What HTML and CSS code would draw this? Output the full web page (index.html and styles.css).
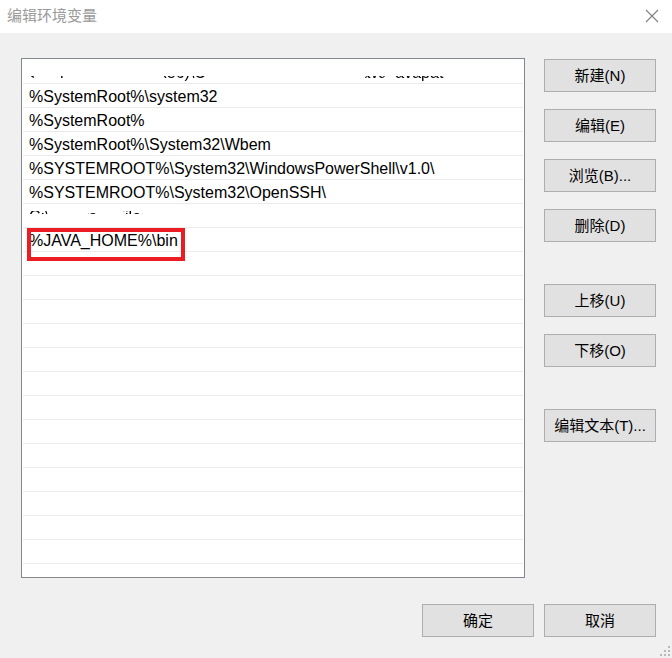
FILE: index.html
```html
<!DOCTYPE html>
<html lang="zh-CN">
<head>
<meta charset="utf-8">
<title>编辑环境变量</title>
<link rel="stylesheet" href="styles.css">
</head>
<body>
<div class="window">
  <header class="titlebar">
    <span class="title">编辑环境变量</span>
    <svg class="close" width="14" height="14" viewBox="0 0 14 14"><path d="M1 1 L13 13 M13 1 L1 13" stroke="#808080" stroke-width="1.1" fill="none"/></svg>
  </header>
  <main class="content">
    <div class="list">
      <div class="row"><span class="ghost ghost-bottom">C:\Program Files (x86)\Common Files\Oracle\Java\javapath</span></div>
      <div class="row">%SystemRoot%\system32</div>
      <div class="row">%SystemRoot%</div>
      <div class="row">%SystemRoot%\System32\Wbem</div>
      <div class="row">%SYSTEMROOT%\System32\WindowsPowerShell\v1.0\</div>
      <div class="row">%SYSTEMROOT%\System32\OpenSSH\</div>
      <div class="row"><span class="ghost ghost-top">C:\Program Files\NVIDIA Corporation\NVIDIA NvDLISR</span></div>
      <div class="row">%JAVA_HOME%\bin</div>
      <div class="row"></div><div class="row"></div><div class="row"></div><div class="row"></div>
      <div class="row"></div><div class="row"></div><div class="row"></div><div class="row"></div>
      <div class="row"></div><div class="row"></div><div class="row"></div><div class="row"></div>
      <div class="row"></div><div class="row"></div>
      <div class="highlight"></div>
    </div>
    <div class="side">
      <div class="group">
        <button class="btn">新建(N)</button>
        <button class="btn">编辑(E)</button>
        <button class="btn">浏览(B)...</button>
        <button class="btn">删除(D)</button>
      </div>
      <div class="group">
        <button class="btn">上移(U)</button>
        <button class="btn">下移(O)</button>
      </div>
      <div class="group">
        <button class="btn">编辑文本(T)...</button>
      </div>
    </div>
  </main>
  <footer class="footer">
    <button class="btn">确定</button>
    <button class="btn">取消</button>
  </footer>
  <svg class="grip" width="12" height="12" viewBox="0 0 12 12" fill="#b8b8b8">
    <rect x="9" y="1" width="2" height="2"/>
    <rect x="5" y="5" width="2" height="2"/><rect x="9" y="5" width="2" height="2"/>
    <rect x="1" y="9" width="2" height="2"/><rect x="5" y="9" width="2" height="2"/><rect x="9" y="9" width="2" height="2"/>
  </svg>
</div>
</body>
</html>
```
FILE: styles.css
```css
* { box-sizing: border-box; }
html, body { margin: 0; padding: 0; }
body {
  width: 672px;
  height: 658px;
  background: #f0f0f0;
  font-family: "Liberation Sans", "Noto Sans CJK SC", sans-serif;
  overflow: hidden;
}
.window {
  position: relative;
  width: 672px;
  height: 658px;
}
.titlebar {
  height: 33px;
  background: #ffffff;
  display: flex;
  align-items: center;
  justify-content: space-between;
  padding: 0 13px 5px 7px;
}
.title {
  font-family: "Noto Sans CJK SC", sans-serif;
  font-size: 15px;
  color: #9a9a9a;
}
.close { display: block; margin-top: 3px; }
.content {
  display: flex;
  padding: 25px 0 0 21px;
  gap: 19px;
}
.list {
  position: relative;
  width: 504px;
  height: 520px;
  border: 1px solid #828790;
  background: #ffffff;
  padding: 1px 1px 0 1px;
  overflow: hidden;
}
.row {
  height: 24px;
  border-bottom: 1px solid #ebebeb;
  font-size: 16px;
  line-height: 23px;
  padding: 1px 0 0 6px;
  color: #000;
  white-space: nowrap;
}
.ghost { display: block; }
.ghost-bottom {
  clip-path: inset(15px 0 3px 0);
  -webkit-mask-image: linear-gradient(to right, #000 0 1%, transparent 1% 6%, #000 6% 7%, transparent 7% 27%, #000 27% 36%, transparent 36% 68%, #000 68% 72%, transparent 72% 74%, #000 74% 84%, transparent 84%);
}
.ghost-top {
  clip-path: inset(6px 0 14px 0);
  -webkit-mask-image: linear-gradient(to right, #000 0 4%, transparent 4% 12%, #000 12% 14%, transparent 14% 19%, #000 19% 23%, transparent 23%);
}
.highlight {
  position: absolute;
  left: 5px;
  top: 169px;
  width: 158px;
  height: 33px;
  border: 4px solid #ec1c24;
}
.side {
  display: flex;
  flex-direction: column;
  gap: 42px;
  padding-top: 1px;
}
.group {
  display: flex;
  flex-direction: column;
  gap: 17px;
}
.btn {
  width: 112px;
  height: 33px;
  margin: 0;
  padding: 0;
  background: #e1e1e1;
  border: 1px solid #adadad;
  border-radius: 0;
  font-family: "Liberation Sans", "Noto Sans CJK SC", sans-serif;
  font-size: 15px;
  color: #000;
  line-height: 31px;
  text-align: center;
}
.footer {
  display: flex;
  justify-content: flex-end;
  gap: 10px;
  padding: 26px 16px 0 0;
}
.grip {
  position: absolute;
  right: 1px;
  bottom: 1px;
}
```
